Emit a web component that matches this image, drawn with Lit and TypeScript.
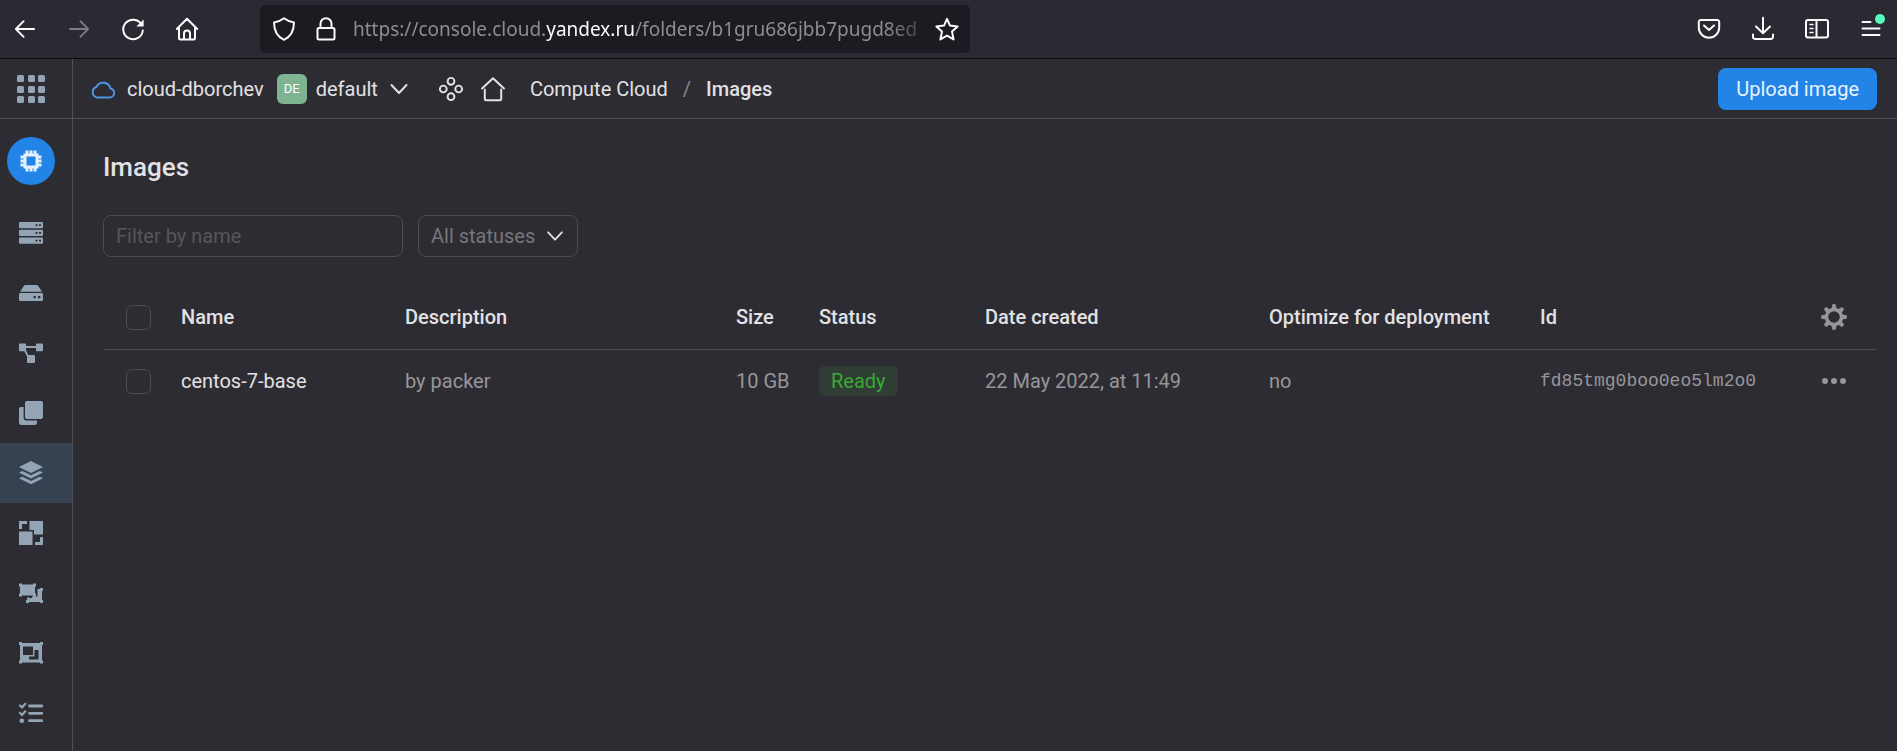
import { LitElement, html, css, svg } from "lit";
import { customElement, state } from "lit/decorators.js";

const icon = (size: number, body: unknown) => html`
  <svg class="icon" width=${size} height=${size} viewBox="0 0 24 24" aria-hidden="true">${body}</svg>`;

const line = (d: string, w = 2) => svg`<path d=${d} fill="none" stroke="currentColor" stroke-width=${w} stroke-linecap="round" stroke-linejoin="round"></path>`;
const solid = (d: string) => svg`<path d=${d} fill="currentColor" fill-rule="evenodd"></path>`;

const icons = {
  back: line("M22 12H2M10.500 3.500 2 12l8.500 8.500"),
  forward: line("M2 12h20M13.500 3.500 22 12l-8.500 8.500"),
  reload: svg`${line("M20.500 7.500A9.800 9.800 0 1 0 21.800 13.500")}<path d="M22.600 2.600v7h-7.200z" fill="currentColor"></path>`,
  home: line("M1.800 12 12 1.800 22.200 12M4 10v11a1.500 1.500 0 0 0 1.500 1.500h13A1.500 1.500 0 0 0 20 21V10M9 22v-5.500a3 3 0 0 1 6 0V22"),
  shield: line("M12 1.200c3 2.300 6.300 3.600 10 4.300-.1 8-2.600 14-10 17.300C4.600 19.500 2.100 13.500 2 5.500c3.700-.7 7-2 10-4.300z"),
  lock: line("M6.500 11V6.700a5.500 5.500 0 0 1 11 0V11M5 11h14a1.500 1.500 0 0 1 1.500 1.500V21a1.500 1.500 0 0 1-1.500 1.500H5A1.500 1.500 0 0 1 3.500 21v-8.500A1.500 1.500 0 0 1 5 11z"),
  star: line("m12 1.800 3 6.800 7.600.8-5.600 5.200 1.600 7.800L12 18.600l-6.600 3.800L7 14.600 1.400 9.400 9 8.600z"),
  pocket: line("M3.700 3h16.600A1.900 1.900 0 0 1 22.200 5v5.500a10.200 10.200 0 0 1-20.400 0V5a1.900 1.900 0 0 1 1.900-2zM7 8.500l5 4.500 5-4.500"),
  download: line("M12 .8v15.400M5 9.500l7 6.800 7-6.800M2 17.500v2.300A2.300 2.300 0 0 0 4.300 22h15.400a2.300 2.300 0 0 0 2.300-2.200v-2.300"),
  panel: svg`${line("M3 3h18a2 2 0 0 1 2 2v13.500a2 2 0 0 1-2 2H3a2 2 0 0 1-2-2V5a2 2 0 0 1 2-2zM11.500 3v17.500")}${line("M5 7.500h3M5 11.500h3M5 15.500h3", 1.6)}`,
  cloud: line("M6 20.500h12.500a4.600 4.600 0 0 0 1-9.100A7.600 7.600 0 0 0 5.300 10 5.500 5.500 0 0 0 6 20.500z", 2),
  chevron: line("M4.500 8 12 16l7.500-8", 2),
  nodes: svg`<g fill="none" stroke="currentColor" stroke-width="1.900"><circle cx="12" cy="4.300" r="3.400"></circle><circle cx="12" cy="19.700" r="3.400"></circle><circle cx="4.300" cy="12" r="3.400"></circle><circle cx="19.700" cy="12" r="3.400"></circle></g>`,
  house: line("M1 11.500 12 1.300l11 10.200M3.800 12.500V22a1.200 1.200 0 0 0 1.200 1.200h14a1.200 1.200 0 0 0 1.200-1.200v-9.500", 2),
  chip: solid("M6.500 1.500h3v3h1v-3h3v3h1v-3h3v3h2v2h3v3h-3v1h3v3h-3v1h3v3h-3v2h-2v3h-3v-3h-1v3h-3v-3h-1v3h-3v-3h-2v-2h-3v-3h3v-1h-3v-3h3v-1h-3v-3h3v-2h2zM7.500 7.500v9h9v-9z"),
  servers: svg`<g fill="currentColor"><rect y="1" width="24" height="6.300" rx="1"></rect><rect y="8.800" width="24" height="6.300" rx="1"></rect><rect y="16.500" width="24" height="6.300" rx="1"></rect></g><path d="M16.500 3.300h2v1.800h-2zM20 3.300h2v1.800h-2zM16.500 11h2v1.800h-2zM20 11h2v1.800h-2zM16.500 18.700h2v1.800h-2zM20 18.700h2v1.800h-2z" fill="#2d2c33"></path>`,
  disk: svg`${solid("M6.500 4h11a2 2 0 0 1 1.700 1L23 10.700H1L4.800 5a2 2 0 0 1 1.700-1zM1.300 12h21.400A1.300 1.300 0 0 1 24 13.300v5.200a1.500 1.500 0 0 1-1.500 1.500h-21A1.500 1.500 0 0 1 0 18.500v-5.200A1.300 1.300 0 0 1 1.300 12z")}<path d="M14.500 15h2.300v2.300h-2.300zM19 15h2.300v2.300H19z" fill="#2d2c33"></path>`,
  network: solid("M1 2.500h5a1 1 0 0 1 1 1V5h10V3.500a1 1 0 0 1 1-1h5a1 1 0 0 1 1 1v5.800a1 1 0 0 1-1 1h-5a1 1 0 0 1-1-1V7H7v2.300l2.300 4.700H15a1 1 0 0 1 1 1v6a1 1 0 0 1-1 1H9a1 1 0 0 1-1-1v-5.500L5.300 10.300H1a1 1 0 0 1-1-1V3.500a1 1 0 0 1 1-1z"),
  copies: solid("M8 0h14a2 2 0 0 1 2 2v14a2 2 0 0 1-2 2H8a2 2 0 0 1-2-2V2a2 2 0 0 1 2-2zM4.600 6v11a2.400 2.400 0 0 0 2.400 2.400h11V22a2 2 0 0 1-2 2H2a2 2 0 0 1-2-2V8a2 2 0 0 1 2-2z"),
  layers: solid("M12 0l12 6-12 6L0 6zM0 11.500l3.300-1.500L12 14.300 20.700 10l3.300 1.500-12 6zM0 17.200l3.300-1.500L12 20l8.700-4.300 3.300 1.500-12 6z"),
  placement: solid("M0 0h8v3H3v5H0zM10.500 0H24v13.500h-9V9h-4.500zM0 10.500h13.500V24H0zM21 16h3v8h-8v-3h5z"),
  group: solid("M0 2.500h3v1h11v-1h3v3h-1v7h1v3h-3v-1H3v1H0v-3h1v-7H0zM18.500 8H21V7h3v3h-1v9h1v3h-3v-1h-11v1H7v-3h1v-2.500h2.500V17H13v-1.500h5.500z"),
  frame: solid("M0 1h3v1h18V1h3v3h-1v15.500h1v3h-3v-1H3v1H0v-3h1V4H0zM4 5.500V14h10V5.500zM15.500 9v6.500H10V18.500h9.500V9z"),
  checks: svg`${line("M1 4.500 3 6.500 6.300 2.800M1 12 3 14l3.300-3.700", 2.2)}<circle cx="2.800" cy="19.700" r="2.300" fill="currentColor"></circle>${line("M10.500 5h12.300M10.500 12.300h12.300M10.500 19.700h12.300", 2.8)}`,
};

const sections = ["servers", "disk", "network", "copies", "layers", "placement", "group", "frame", "checks"] as const;
const titles = ["Virtual machines", "Disks", "Instance groups", "Snapshots", "Images", "Placement groups", "Disk placement", "Host groups", "Operations"];

const columns = ["Name", "Description", "Size", "Status", "Date created", "Optimize for deployment", "Id"];
const images = [
  { name: "centos-7-base", description: "by packer", size: "10 GB", status: "Ready", created: "22 May 2022, at 11:49", optimized: "no", id: "fd85tmg0boo0eo5lm2o0" },
];

@customElement("app-root")
export class AppRoot extends LitElement {
  @state() private filter = "";

  static styles = css`
    :host {
      display: flex; flex-direction: column; min-height: 100vh; box-sizing: border-box;
      background: #2d2c33; color: #e2e1e3;
      font: 20px/24px Roboto, "Liberation Sans", sans-serif;
    }
    * { box-sizing: border-box; }
    button, input, select { font: inherit; color: inherit; }
    button { background: none; border: 0; padding: 0; cursor: pointer; display: grid; place-items: center; }
    a { color: inherit; text-decoration: none; }
    .icon { display: block; overflow: visible; }
    .browser { display: flex; align-items: center; height: 59px; padding: 0 14px 0 13px; background: #2b2a33; border-bottom: 1px solid #0c0c0d; color: #fbfbfe; }
    .nav { display: flex; gap: 30px; }
    .nav button { width: 24px; height: 24px; }
    .nav button:disabled { color: #7c7b82; }
    .address { display: flex; align-items: center; flex: 0 1 710px; min-width: 0; height: 48px; margin-left: 61px; padding: 0 11px 0 12px; border-radius: 5px; background: #1c1b22; }
    .marks { display: flex; gap: 18px; margin-right: 15px; }
    .url { flex: 1; min-width: 0; overflow: hidden; white-space: nowrap; font: 19px/30px "Noto Sans", "Open Sans", sans-serif; color: #8d8c93; -webkit-mask-image: linear-gradient(to right, #000 calc(100% - 48px), transparent); mask-image: linear-gradient(to right, #000 calc(100% - 48px), transparent); }
    .url b { font-weight: 400; color: #fbfbfe; }
    .tools { display: flex; gap: 30px; margin-left: auto; }
    .menu { position: relative; }
    .dot { position: absolute; top: -3px; right: -2px; width: 10px; height: 10px; border-radius: 50%; background: #54ffbd; }

    .shell { flex: 1; display: grid; grid-template-columns: 73px 1fr; grid-template-rows: 60px 1fr; }
    .apps, .side { border-right: 1px solid #504f56; }
    .apps, .top { border-bottom: 1px solid #504f56; }
    .apps { display: flex; align-items: center; padding-left: 17px; color: #93a5b5; }
    .top { display: flex; align-items: center; padding: 0 20px 0 18px; }
    .cloud { display: flex; align-items: center; gap: 12px; color: #e2e1e3; }
    .cloud .icon { color: #4e93dd; }
    .folder { display: flex; align-items: center; gap: 9px; margin-left: 13px; }
    .badge { display: grid; place-items: center; width: 30px; height: 30px; border-radius: 6px; background: #7eb491; color: #fff; font-size: 13px; }
    .quick { display: flex; gap: 18px; margin-left: 28px; }
    .crumbs { display: flex; gap: 15px; margin-left: 25px; }
    .crumbs span { color: #8a898e; }
    .crumbs a[aria-current] { font-weight: 500; }
    .upload { height: 42px; margin-left: auto; padding: 0 18px; border-radius: 8px; background: #2284e6; color: #e8f2fd; }
    .side { padding-top: 18px; color: #93a5b5; }
    .service { display: grid; place-items: center; width: 48px; height: 48px; margin: 0 0 18px 7px; border-radius: 50%; background: #2284e6; color: #e3effc; }
    .item { display: flex; align-items: center; height: 60px; padding-left: 19px; }
    .item.active { background: #364252; }
    main { padding: 30px 20px 0 30px; min-width: 0; }
    h1 { margin: 0; font-size: 26px; line-height: 36px; font-weight: 500; }
    .filters { display: flex; gap: 15px; margin-top: 30px; }
    .field { height: 42px; border: 1px solid #4c4b52; border-radius: 8px; background: transparent; outline: 0; }
    .name { width: 300px; padding: 0 12px; }
    .name::placeholder { color: #57565c; opacity: 1; }
    .pick { position: relative; display: flex; align-items: center; }
    .status { width: 160px; padding: 0 40px 0 12px; color: #77767b; appearance: none; }
    .pick .icon { position: absolute; right: 12px; pointer-events: none; }
    table { width: 100%; margin-top: 28px; border-collapse: separate; border-spacing: 0; table-layout: fixed; text-align: left; white-space: nowrap; }
    th, td { padding: 0; }
    th { height: 65px; font-weight: 500; border-bottom: 1px solid #4c4b52; }
    td { height: 62px; color: #97969a; }
    .c0 { width: 78px; padding-left: 23px; } .c1 { width: 224px; } .c2 { width: auto; } .c3 { width: 83px; }
    .c4 { width: 166px; } .c5 { width: 284px; } .c6 { width: 271px; } .c7 { width: 281px; } .c8 { width: 56px; }
    .check { display: block; appearance: none; width: 25px; height: 25px; margin: 0; border: 1px solid #4c4b52; border-radius: 6px; }
    .link { color: #e2e1e3; }
    .ready { display: inline-block; padding: 3px 12px; border-radius: 6px; background: #2f3d34; color: #39a935; }
    .id { font: 18px/24px "Liberation Mono", monospace; }
    .act { width: 26px; color: #97969a; }
  `;

  render() {
    const rows = images.filter((i) => i.name.includes(this.filter));
    return html`
      <header class="browser">
        <div class="nav">
          <button aria-label="Back">${icon(22, icons.back)}</button>
          <button aria-label="Forward" disabled>${icon(22, icons.forward)}</button>
          <button aria-label="Reload">${icon(24, icons.reload)}</button>
          <button aria-label="Home">${icon(24, icons.home)}</button>
        </div>
        <div class="address">
          <div class="marks">${icon(24, icons.shield)}${icon(24, icons.lock)}</div>
          <div class="url">https://console.cloud.<b>yandex.ru</b>/folders/b1gru686jbb7pugd8ed</div>
          <button aria-label="Bookmark">${icon(24, icons.star)}</button>
        </div>
        <div class="tools">
          <button aria-label="Pocket">${icon(24, icons.pocket)}</button>
          <button aria-label="Downloads">${icon(24, icons.download)}</button>
          <button aria-label="Sidebars">${icon(24, icons.panel)}</button>
          <button class="menu" aria-label="Menu">${icon(24, line("M3.500 5h8M3.500 11.500h17M3.500 18h17"))}<span class="dot"></span></button>
        </div>
      </header>
      <div class="shell">
        <button class="apps" aria-label="All services">
          <svg class="icon" width="28" height="28" viewBox="0 0 28 28" fill="currentColor">
            ${[0, 11, 21].map((y) => [0, 11, 21].map((x) => svg`<rect x=${x} y=${y} width="7" height="7" rx="1.500"></rect>`))}
          </svg>
        </button>
        <div class="top">
          <a class="cloud" href="#">${icon(24, icons.cloud)}cloud-dborchev</a>
          <a class="folder" href="#"><span class="badge">DE</span>default ${icon(24, icons.chevron)}</a>
          <div class="quick">
            <button aria-label="Services">${icon(24, icons.nodes)}</button>
            <button aria-label="Home page">${icon(24, icons.house)}</button>
          </div>
          <nav class="crumbs"><a href="#">Compute Cloud</a><span>/</span><a href="#" aria-current="page">Images</a></nav>
          <button class="upload">Upload image</button>
        </div>
        <nav class="side">
          <a class="service" href="#" aria-label="Compute Cloud">${icon(24, icons.chip)}</a>
          ${sections.map((s, i) => html`<a class="item ${s === "layers" ? "active" : ""}" href="#" aria-label=${titles[i]}>${icon(24, icons[s])}</a>`)}
        </nav>
        <main>
          <h1>Images</h1>
          <div class="filters">
            <input class="field name" aria-label="Filter by name" placeholder="Filter by name"
              @input=${(e: Event) => (this.filter = (e.target as HTMLInputElement).value)} />
            <div class="pick">
              <select class="field status" aria-label="Status"><option>All statuses</option></select>
              ${icon(22, icons.chevron)}
            </div>
          </div>
          <table>
            <thead><tr>
              <th class="c0"><input class="check" type="checkbox" aria-label="Select all" /></th>
              ${columns.map((c, i) => html`<th class="c${i + 1}">${c}</th>`)}
              <th class="c8"><button class="act" aria-label="Table settings">
                <svg class="icon" width="26" height="26" viewBox="-13 -13 26 26" fill="none" stroke="currentColor">
                  <circle r="7.500" stroke-width="3.400"></circle>
                  ${[0, 45, 90, 135, 180, 225, 270, 315].map((a) => svg`<path d="M-2.200-8-1.400-12.500H1.400L2.200-8z" fill="currentColor" stroke-width=".6" transform="rotate(${a})"></path>`)}
                </svg></button></th>
            </tr></thead>
            <tbody>${rows.map((r) => html`<tr>
              <td class="c0"><input class="check" type="checkbox" aria-label="Select ${r.name}" /></td>
              <td><a class="link" href="#">${r.name}</a></td>
              <td>${r.description}</td>
              <td>${r.size}</td>
              <td><span class="ready">${r.status}</span></td>
              <td>${r.created}</td>
              <td>${r.optimized}</td>
              <td class="id">${r.id}</td>
              <td><button class="act" aria-label="Actions">
                <svg class="icon" width="26" height="26" viewBox="-13 -13 26 26" fill="currentColor"><circle cx="-9" r="3"></circle><circle r="3"></circle><circle cx="9" r="3"></circle></svg>
              </button></td>
            </tr>`)}</tbody>
          </table>
        </main>
      </div>
    `;
  }
}
